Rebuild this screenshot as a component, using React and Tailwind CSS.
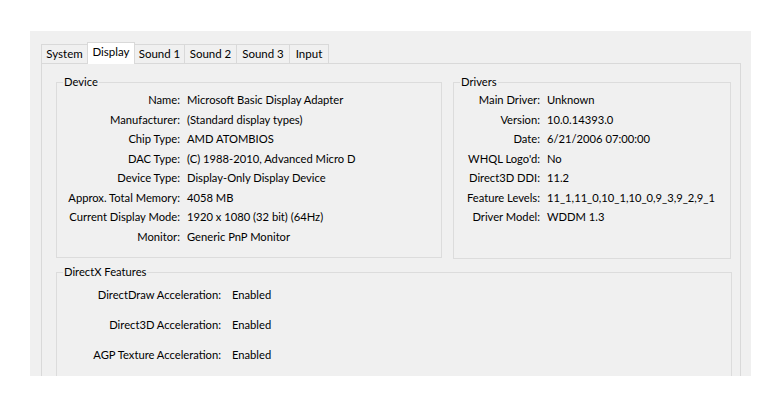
const tabs = [
  { name: 'System', w: 'w-[47px]' },
  { name: 'Display', w: 'w-[48px]', active: true },
  { name: 'Sound 1', w: 'w-[51px]' },
  { name: 'Sound 2', w: 'w-[53px]' },
  { name: 'Sound 3', w: 'w-[54px]' },
  { name: 'Input', w: 'w-[40px]' },
]

const device = [
  ['Name', 'Microsoft Basic Display Adapter'],
  ['Manufacturer', '(Standard display types)'],
  ['Chip Type', 'AMD ATOMBIOS'],
  ['DAC Type', '(C) 1988-2010, Advanced Micro D'],
  ['Device Type', 'Display-Only Display Device'],
  ['Approx. Total Memory', '4058 MB'],
  ['Current Display Mode', '1920 x 1080 (32 bit) (64Hz)'],
  ['Monitor', 'Generic PnP Monitor'],
]

const drivers = [
  ['Main Driver', 'Unknown'],
  ['Version', '10.0.14393.0'],
  ['Date', '6/21/2006 07:00:00'],
  ["WHQL Logo'd", 'No'],
  ['Direct3D DDI', '11.2'],
  ['Feature Levels', '11_1,11_0,10_1,10_0,9_3,9_2,9_1'],
  ['Driver Model', 'WDDM 1.3'],
]

const features = [
  ['DirectDraw Acceleration', 'Enabled'],
  ['Direct3D Acceleration', 'Enabled'],
  ['AGP Texture Acceleration', 'Enabled'],
]

function Rows({ rows, labelW, gap, rowH }) {
  return (
    <div>
      {rows.map(([label, value]) => (
        <div key={label} className={`flex whitespace-nowrap ${rowH}`}>
          <span className={`${labelW} shrink-0 text-right`}>{label}:</span>
          <span className={gap}>{value}</span>
        </div>
      ))}
    </div>
  )
}

function Group({ title, className, children }) {
  return (
    <fieldset className={`border border-[#dcdcdc] ${className}`}>
      <legend className="ml-[6px] px-px leading-[16px]">{title}</legend>
      {children}
    </fieldset>
  )
}

export default function App() {
  return (
    <div className="h-[406px] w-[782px] bg-white pl-[30px] pt-[31px] font-['Lato',sans-serif] text-[11.2px] text-black">
      <div className="h-[345px] w-[721px] overflow-hidden bg-[#f0f0f0] pl-[11px] pt-[11px]">
        <div className="flex h-[21px] items-end pl-px text-[11.5px]">
          {tabs.map((t) =>
            t.active ? (
              <div
                key={t.name}
                className={`${t.w} relative z-10 -mb-px -ml-px flex h-[22px] items-center justify-center border border-b-0 border-[#d9d9d9] bg-white pb-[3px]`}
              >
                {t.name}
              </div>
            ) : (
              <div
                key={t.name}
                className={`${t.w} -ml-px flex h-[19px] items-center justify-center border border-b-0 border-[#d9d9d9] bg-[#f0f0f0]`}
              >
                {t.name}
              </div>
            )
          )}
        </div>
        <div className="h-[400px] w-[700px] border border-[#d9d9d9] bg-[#f0f0f0] pl-[14px] pt-[10px]">
          <div className="flex gap-[11px]">
            <Group title="Device" className="h-[184px] w-[386px]">
              <Rows rows={device} labelW="w-[123px]" gap="pl-[7px]" rowH="leading-[19.5px]" />
            </Group>
            <Group title="Drivers" className="h-[185px] w-[278px]">
              <Rows rows={drivers} labelW="w-[86px]" gap="pl-[7px]" rowH="leading-[19.5px]" />
            </Group>
          </div>
          <Group title="DirectX Features" className="mt-[5px] h-[200px] w-[676px]">
            <Rows rows={features} labelW="w-[164px]" gap="pl-[11px]" rowH="leading-[30px]" />
          </Group>
        </div>
      </div>
    </div>
  )
}
